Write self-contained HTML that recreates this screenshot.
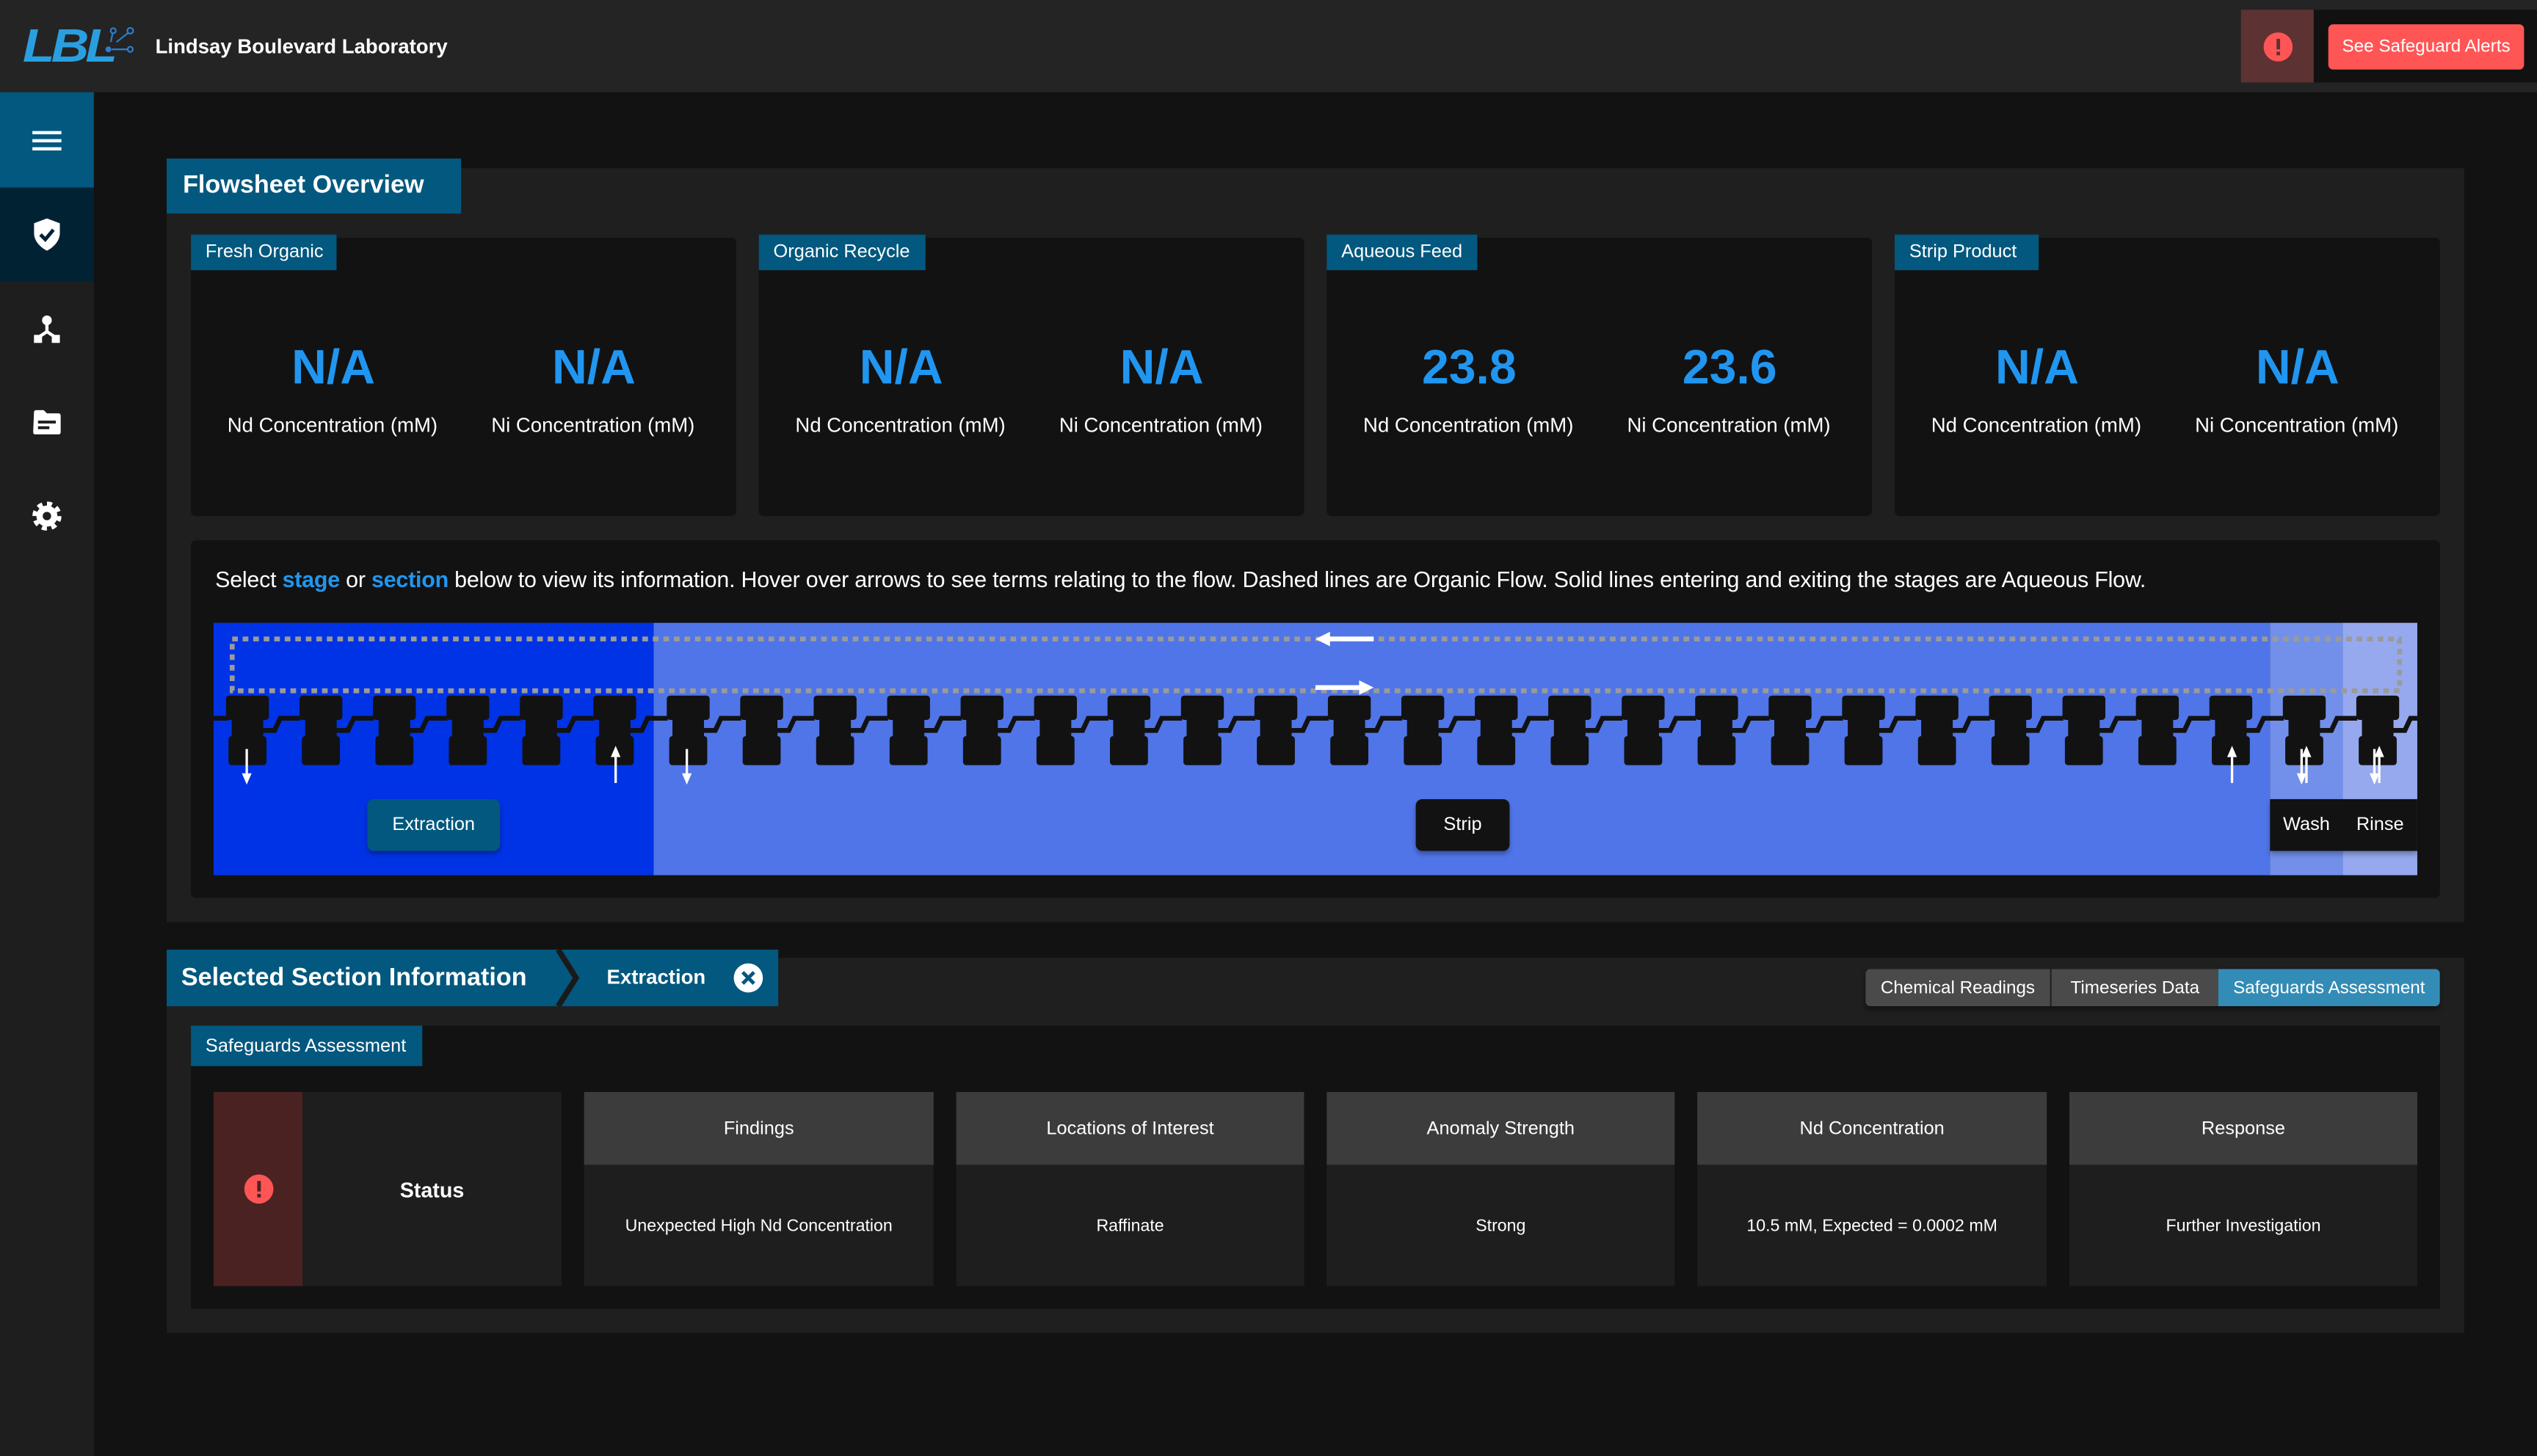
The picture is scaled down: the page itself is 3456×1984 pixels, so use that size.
<!DOCTYPE html>
<html><head><meta charset="utf-8">
<style>
*{box-sizing:border-box;margin:0;padding:0}
html,body{width:3456px;height:1984px;overflow:hidden;background:#121212}
#p{position:absolute;left:0;top:0;width:1568px;height:900px;transform:scale(2.2041,2.2044);transform-origin:0 0;background:#121212;font-family:"Liberation Sans",sans-serif;color:#fff}
.a{position:absolute}
.c{display:flex;align-items:center;justify-content:center;text-align:center}
.tag{position:absolute;background:#02587e;font-size:11.5px;display:flex;align-items:center;padding-left:9px;height:22px}
.card{position:absolute;background:#121212;border-radius:3px;top:147px;width:337px;height:172px}
.val{position:absolute;top:211px;width:160px;text-align:center;color:#2196f0;font-weight:bold;font-size:30px}
.lab{position:absolute;top:256px;width:165px;text-align:center;font-size:12.5px;white-space:nowrap}
.col{position:absolute;top:675px;width:216px;height:120px;background:#1e1e1e}
.col .h{height:45px;background:#3c3c3c;font-size:11.5px}
.col .b{height:75px;font-size:10.5px}
</style></head><body><div id="p">
<!-- header -->
<div class="a" style="left:0;top:0;width:1568px;height:57px;background:#242424"></div>
<div class="a" style="left:14px;top:15px;font:italic bold 29px 'Liberation Sans',sans-serif;color:#2a9fe0;letter-spacing:-2px;line-height:28px;transform:scaleX(1.12);transform-origin:0 0">LBL</div>
<svg class="a" style="left:57px;top:16px" width="26" height="20" viewBox="0 0 26 20">
<g fill="none" stroke="#2a7fd0" stroke-width="1"><circle cx="13" cy="3" r="1.6"/><circle cx="23.5" cy="3" r="1.8"/><circle cx="23.5" cy="14.5" r="1.6"/><line x1="12.5" y1="5" x2="11.5" y2="10"/><line x1="22" y1="4.5" x2="15" y2="10"/><line x1="12" y1="14.5" x2="21.5" y2="14.5"/></g><circle cx="10" cy="14.5" r="1.8" fill="#2a7fd0"/></svg>
<div class="a" style="left:96px;top:20px;font-weight:bold;font-size:12.5px;line-height:18px">Lindsay Boulevard Laboratory</div>
<div class="a c" style="left:1385px;top:6px;width:45px;height:45px;background:#5c3232"><svg width="18" height="18" viewBox="0 0 18 18"><circle cx="9" cy="9" r="9" fill="#ff5555"/><rect x="8" y="4" width="2.2" height="6.5" fill="#5c3232"/><rect x="8" y="12" width="2.2" height="2.2" fill="#5c3232"/></svg></div>
<div class="a" style="left:1430px;top:6px;width:138px;height:45px;background:#111"></div>
<div class="a c" style="left:1439px;top:15px;width:121px;height:28px;background:#ff5555;border-radius:3px;font-size:11px">See Safeguard Alerts</div>
<!-- sidebar -->
<div class="a" style="left:0;top:57px;width:58px;height:843px;background:#1e1e1e"></div>
<div class="a c" style="left:0;top:57px;width:58px;height:59px;background:#02587e"><svg width="18" height="14"><rect y="1" width="18" height="2" fill="#fff"/><rect y="6" width="18" height="2" fill="#fff"/><rect y="11" width="18" height="2" fill="#fff"/></svg></div>
<div class="a c" style="left:0;top:116px;width:58px;height:58px;background:#012233"><svg width="16" height="20" viewBox="0 0 16 20"><path d="M8 0 L16 3 V9 C16 14 12 18 8 20 C4 18 0 14 0 9 V3 Z" fill="#fff"/><path d="M4 10 L7 13 L12 7" stroke="#012233" stroke-width="2.2" fill="none"/></svg></div>
<svg class="a" style="left:20px;top:194px" width="18" height="18" viewBox="0 0 18 18"><circle cx="9" cy="4" r="3" fill="#fff"/><path d="M9 6 V11 L3 15 M9 11 L15 15" stroke="#fff" stroke-width="2" fill="none"/><rect x="1" y="13" width="5" height="5" fill="#fff"/><rect x="12" y="13" width="5" height="5" fill="#fff"/></svg>
<svg class="a" style="left:20px;top:253px" width="18" height="16" viewBox="0 0 18 16"><path d="M1 2 C1 1 1.5 0.5 2.5 0.5 H7 L9 2.5 H16 C17 2.5 17.5 3 17.5 4 V14 C17.5 15 17 15.5 16 15.5 H2 C1 15.5 0.5 15 0.5 14 Z" fill="#fff"/><rect x="3.5" y="7" width="11" height="1.8" fill="#1e1e1e"/><rect x="3.5" y="10.5" width="7" height="1.8" fill="#1e1e1e"/></svg>
<svg class="a" style="left:20px;top:310px" width="18" height="18" viewBox="0 0 18 18"><circle cx="9" cy="9" r="6.5" fill="#fff"/><circle cx="9" cy="9" r="7.3" fill="none" stroke="#fff" stroke-width="3.4" stroke-dasharray="3 2.73"/><circle cx="9" cy="9" r="2.6" fill="#1e1e1e"/></svg>
<!-- flowsheet panel -->
<div class="a" style="left:103px;top:104px;width:1420px;height:466px;background:#1f1f1f"></div>
<div class="a" style="left:103px;top:98px;width:182px;height:34px;background:#02587e;font-weight:bold;font-size:15.5px;line-height:34px;padding-left:10px">Flowsheet Overview</div>
<div class="card" style="left:118px"></div><div class="card" style="left:469px"></div><div class="card" style="left:820px"></div><div class="card" style="left:1171px"></div>
<div class="tag" style="left:118px;top:145px;width:90px">Fresh Organic</div>
<div class="tag" style="left:469px;top:145px;width:103px">Organic Recycle</div>
<div class="tag" style="left:820px;top:145px;width:93px">Aqueous Feed</div>
<div class="tag" style="left:1171px;top:145px;width:89px">Strip Product</div>
<div class="val" style="left:126px">N/A</div><div class="val" style="left:287px">N/A</div>
<div class="val" style="left:477px">N/A</div><div class="val" style="left:638px">N/A</div>
<div class="val" style="left:828px">23.8</div><div class="val" style="left:989px">23.6</div>
<div class="val" style="left:1179px">N/A</div><div class="val" style="left:1340px">N/A</div>
<div class="lab" style="left:123px">Nd Concentration (mM)</div><div class="lab" style="left:284px">Ni Concentration (mM)</div>
<div class="lab" style="left:474px">Nd Concentration (mM)</div><div class="lab" style="left:635px">Ni Concentration (mM)</div>
<div class="lab" style="left:825px">Nd Concentration (mM)</div><div class="lab" style="left:986px">Ni Concentration (mM)</div>
<div class="lab" style="left:1176px">Nd Concentration (mM)</div><div class="lab" style="left:1337px">Ni Concentration (mM)</div>
<!-- diagram card -->
<div class="a" style="left:118px;top:334px;width:1390px;height:221px;background:#121212;border-radius:3px"></div>
<div class="a" style="left:133px;top:351px;font-size:13.8px;white-space:nowrap;letter-spacing:-0.1px">Select <b style="color:#2196f0">stage</b> or <b style="color:#2196f0">section</b> below to view its information. Hover over arrows to see terms relating to the flow. Dashed lines are Organic Flow. Solid lines entering and exiting the stages are Aqueous Flow.</div>
<svg class="a" style="left:0;top:0" width="1568" height="900" viewBox="0 0 1568 900">
<defs>
<clipPath id="cl"><rect x="132" y="385" width="1362" height="156"/></clipPath>
<g id="s"><polyline points="22,21.5 30,21.5 33.5,14 46,14" fill="none" stroke="#121212" stroke-width="3"/><rect x="0" y="0" width="26.5" height="15" rx="2" fill="#121212"/><rect x="3.5" y="13" width="19.5" height="14" fill="#121212"/><rect x="1.5" y="25" width="23.5" height="18" rx="2" fill="#121212"/></g>
</defs>
<rect x="132" y="385" width="272" height="156" fill="#0033e6"/>
<rect x="404" y="385" width="999" height="156" fill="#5075e8"/>
<rect x="1403" y="385" width="45" height="156" fill="#7290ea"/>
<rect x="1448" y="385" width="46" height="156" fill="#96a9ee"/>
<rect x="143.5" y="395" width="1339.5" height="32" fill="none" stroke="#9a9a9a" stroke-width="3" stroke-dasharray="3.5 3"/>
<g clip-path="url(#cl)">
<line x1="132" y1="444" x2="141" y2="444" stroke="#121212" stroke-width="3"/>
<g transform="translate(0,430)">
<use href="#s" x="139.7"/><use href="#s" x="185.1"/><use href="#s" x="230.5"/><use href="#s" x="275.9"/><use href="#s" x="321.3"/><use href="#s" x="366.7"/><use href="#s" x="412.1"/><use href="#s" x="457.5"/><use href="#s" x="502.9"/><use href="#s" x="548.3"/><use href="#s" x="593.7"/><use href="#s" x="639.1"/><use href="#s" x="684.5"/><use href="#s" x="729.9"/><use href="#s" x="775.3"/><use href="#s" x="820.7"/><use href="#s" x="866.1"/><use href="#s" x="911.5"/><use href="#s" x="956.9"/><use href="#s" x="1002.3"/><use href="#s" x="1047.7"/><use href="#s" x="1093.1"/><use href="#s" x="1138.5"/><use href="#s" x="1183.9"/><use href="#s" x="1229.3"/><use href="#s" x="1274.7"/><use href="#s" x="1320.1"/><use href="#s" x="1365.5"/><use href="#s" x="1410.9"/><use href="#s" x="1456.3"/>
</g></g>
<g fill="#fff" stroke="#fff">
<line x1="820" y1="395" x2="849" y2="395" stroke-width="3"/><polygon points="813,395 822,390.5 822,399.5" stroke="none"/>
<line x1="813" y1="425" x2="842" y2="425" stroke-width="3"/><polygon points="849,425 840,420.5 840,429.5" stroke="none"/>
<line x1="152.5" y1="463" x2="152.5" y2="479" stroke-width="1.5"/><polygon points="152.5,485 149.5,478 155.5,478" stroke="none"/>
<line x1="424.5" y1="463" x2="424.5" y2="479" stroke-width="1.5"/><polygon points="424.5,485 421.5,478 427.5,478" stroke="none"/>
<line x1="380.5" y1="468" x2="380.5" y2="484" stroke-width="1.5"/><polygon points="380.5,461 377.5,468 383.5,468" stroke="none"/>
<line x1="1379.5" y1="468" x2="1379.5" y2="484" stroke-width="1.5"/><polygon points="1379.5,461 1376.5,468 1382.5,468" stroke="none"/>
<line x1="1422.5" y1="463" x2="1422.5" y2="479" stroke-width="1.5"/><polygon points="1422.5,485 1419.5,478 1425.5,478" stroke="none"/>
<line x1="1425.5" y1="468" x2="1425.5" y2="484" stroke-width="1.5"/><polygon points="1425.5,461 1422.5,468 1428.5,468" stroke="none"/>
<line x1="1467.5" y1="463" x2="1467.5" y2="479" stroke-width="1.5"/><polygon points="1467.5,485 1464.5,478 1470.5,478" stroke="none"/>
<line x1="1470.5" y1="468" x2="1470.5" y2="484" stroke-width="1.5"/><polygon points="1470.5,461 1467.5,468 1473.5,468" stroke="none"/>
</g>
</svg>
<div class="a c" style="left:227px;top:494px;width:82px;height:32px;background:#02587e;border-radius:4px;font-size:11.5px;box-shadow:0 2px 3px rgba(0,0,0,.3)">Extraction</div>
<div class="a c" style="left:875px;top:494px;width:58px;height:32px;background:#121212;border-radius:4px;font-size:11.5px;box-shadow:0 2px 3px rgba(0,0,0,.3)">Strip</div>
<div class="a" style="left:1403px;top:494px;width:91px;height:32px;background:#121212;box-shadow:0 2px 3px rgba(0,0,0,.3)"></div>
<div class="a c" style="left:1403px;top:494px;width:45px;height:32px;font-size:11.5px">Wash</div>
<div class="a c" style="left:1448px;top:494px;width:46px;height:32px;font-size:11.5px">Rinse</div>
<!-- selected section panel -->
<div class="a" style="left:103px;top:592px;width:1420px;height:232px;background:#1f1f1f"></div>
<div class="a" style="left:103px;top:587px;width:378px;height:35px;background:#02587e"></div>
<svg class="a" style="left:340px;top:587px" width="24" height="35" viewBox="0 0 24 35"><polyline points="5,0 16,17.5 5,35" fill="none" stroke="#1a1a1a" stroke-width="3.5"/></svg>
<div class="a" style="left:112px;top:587px;height:35px;line-height:35px;font-weight:bold;font-size:15.5px;white-space:nowrap">Selected Section Information</div>
<div class="a" style="left:375px;top:587px;height:35px;line-height:35px;font-weight:bold;font-size:12.5px">Extraction</div>
<svg class="a" style="left:453px;top:595px" width="19" height="19" viewBox="0 0 19 19"><circle cx="9.5" cy="9.5" r="9" fill="#fff"/><path d="M6 6 L13 13 M13 6 L6 13" stroke="#02587e" stroke-width="2.2"/></svg>
<div class="a" style="left:1153px;top:599px;width:355px;height:23px;border-radius:3px;overflow:hidden;display:flex;font-size:11px;box-shadow:0 2px 3px rgba(0,0,0,.4)">
<div class="c" style="width:115px;background:#4a4a4a;border-right:1px solid #222">Chemical Readings</div>
<div class="c" style="width:103px;background:#4a4a4a">Timeseries Data</div>
<div class="c" style="flex:1;background:#338cb6">Safeguards Assessment</div></div>
<div class="a" style="left:118px;top:634px;width:1390px;height:175px;background:#121212"></div>
<div class="tag" style="left:118px;top:634px;width:143px;height:25px">Safeguards Assessment</div>
<div class="a c" style="left:132px;top:675px;width:55px;height:120px;background:#4b2222"><svg width="18" height="18" viewBox="0 0 18 18"><circle cx="9" cy="9" r="9" fill="#ff5555"/><rect x="8" y="4" width="2.2" height="6.5" fill="#4b2222"/><rect x="8" y="12" width="2.2" height="2.2" fill="#4b2222"/></svg></div>
<div class="a c" style="left:187px;top:675px;width:160px;height:120px;background:#1e1e1e;font-weight:bold;font-size:13px">Status</div>
<div class="col" style="left:361px"><div class="h c">Findings</div><div class="b c">Unexpected High Nd Concentration</div></div>
<div class="col" style="left:591px;width:215px"><div class="h c">Locations of Interest</div><div class="b c">Raffinate</div></div>
<div class="col" style="left:820px;width:215px"><div class="h c">Anomaly Strength</div><div class="b c">Strong</div></div>
<div class="col" style="left:1049px"><div class="h c">Nd Concentration</div><div class="b c">10.5 mM, Expected = 0.0002 mM</div></div>
<div class="col" style="left:1279px;width:215px"><div class="h c">Response</div><div class="b c">Further Investigation</div></div>
</div></body></html>
